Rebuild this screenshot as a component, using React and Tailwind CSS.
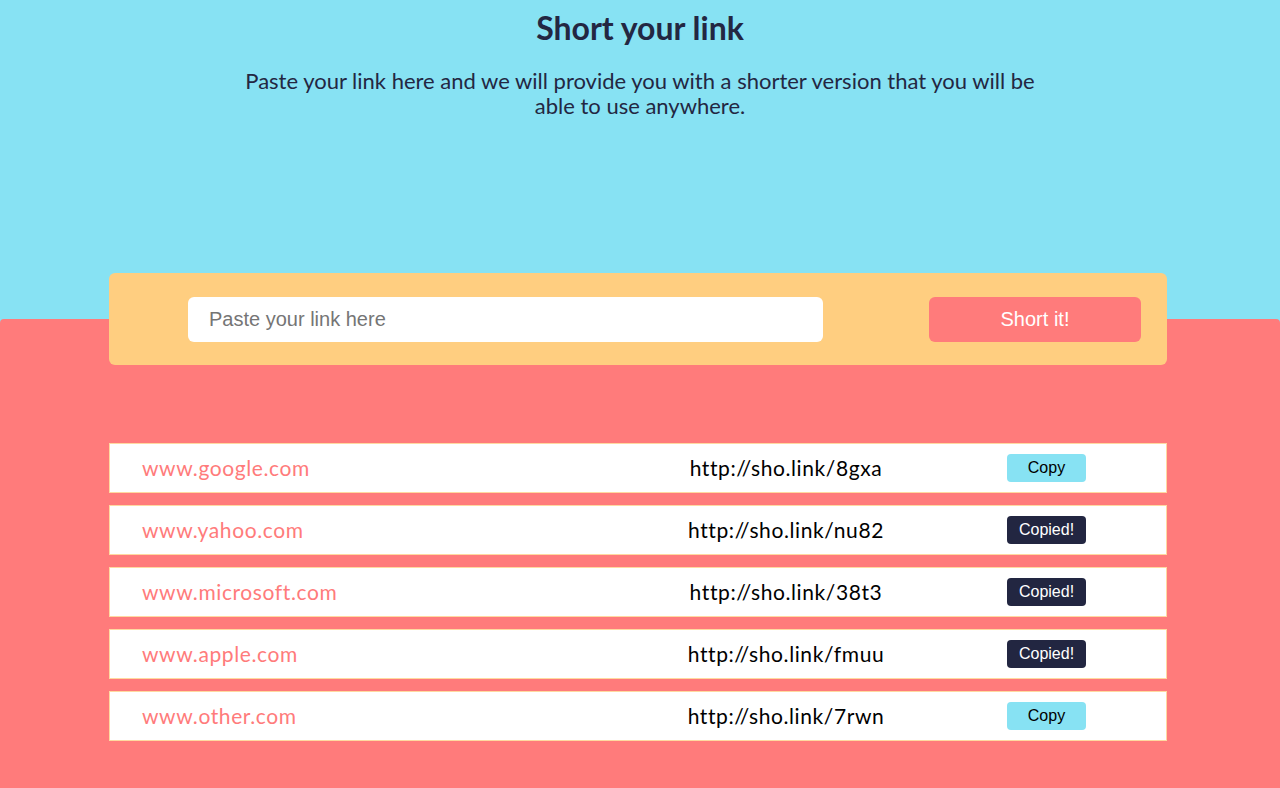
import React from "react";

const rows = [
  { url: "www.google.com", short: "http://sho.link/8gxa", copied: false },
  { url: "www.yahoo.com", short: "http://sho.link/nu82", copied: true },
  { url: "www.microsoft.com", short: "http://sho.link/38t3", copied: true },
  { url: "www.apple.com", short: "http://sho.link/fmuu", copied: true },
  { url: "www.other.com", short: "http://sho.link/7rwn", copied: false },
];

export default function App() {
  return (
    <div className="w-[1280px] h-[788px] overflow-hidden bg-[#87e2f3] flex flex-col font-['Lato',sans-serif]">
      <header className="h-[319px] shrink-0 flex flex-col items-center pt-[10px] text-[#232742]">
        <h1 className="text-[32px] leading-[36px] font-bold">Short your link</h1>
        <p className="mt-[22px] w-[800px] text-center text-[22px] leading-[25px]">
          Paste your link here and we will provide you with a shorter version that you will be able to use anywhere.
        </p>
      </header>
      <main className="flex-1 bg-[#ff7b7b] rounded-t-[4px] pl-[109px] pr-[113px]">
        <div className="-mt-[46px] h-[92px] bg-[#ffce80] rounded-[6px] flex items-center pl-[79px] pr-[26px]">
          <input
            className="w-[635px] h-[45px] bg-white rounded-[6px] px-[21px] text-[20px] font-['Liberation_Sans',Arial,sans-serif] text-[#333] placeholder:text-[#757575] outline-none"
            placeholder="Paste your link here"
          />
          <button className="ml-auto w-[212px] h-[45px] bg-[#ff7b7b] rounded-[6px] text-white text-[20px] font-['Liberation_Sans',Arial,sans-serif]">
            Short it!
          </button>
        </div>
        <div className="mt-[78px] flex flex-col gap-[12px]">
          {rows.map((r) => (
            <div
              key={r.url}
              className="h-[50px] bg-white border border-[#ffd9a0] flex items-center px-[32px]"
            >
              <span className="w-[524px] text-[21px] tracking-[0.6px] text-[#ff7b7b]">{r.url}</span>
              <span className="w-[240px] text-center text-[21px] tracking-[0.6px] text-black">{r.short}</span>
              <button
                className={
                  r.copied
                    ? "ml-[101px] w-[79px] h-[28px] rounded-[4px] bg-[#222641] text-white text-[16px] font-['Liberation_Sans',Arial,sans-serif]"
                    : "ml-[101px] w-[79px] h-[28px] rounded-[4px] bg-[#87e2f3] text-black text-[16px] font-['Liberation_Sans',Arial,sans-serif]"
                }
              >
                {r.copied ? "Copied!" : "Copy"}
              </button>
            </div>
          ))}
        </div>
      </main>
    </div>
  );
}
